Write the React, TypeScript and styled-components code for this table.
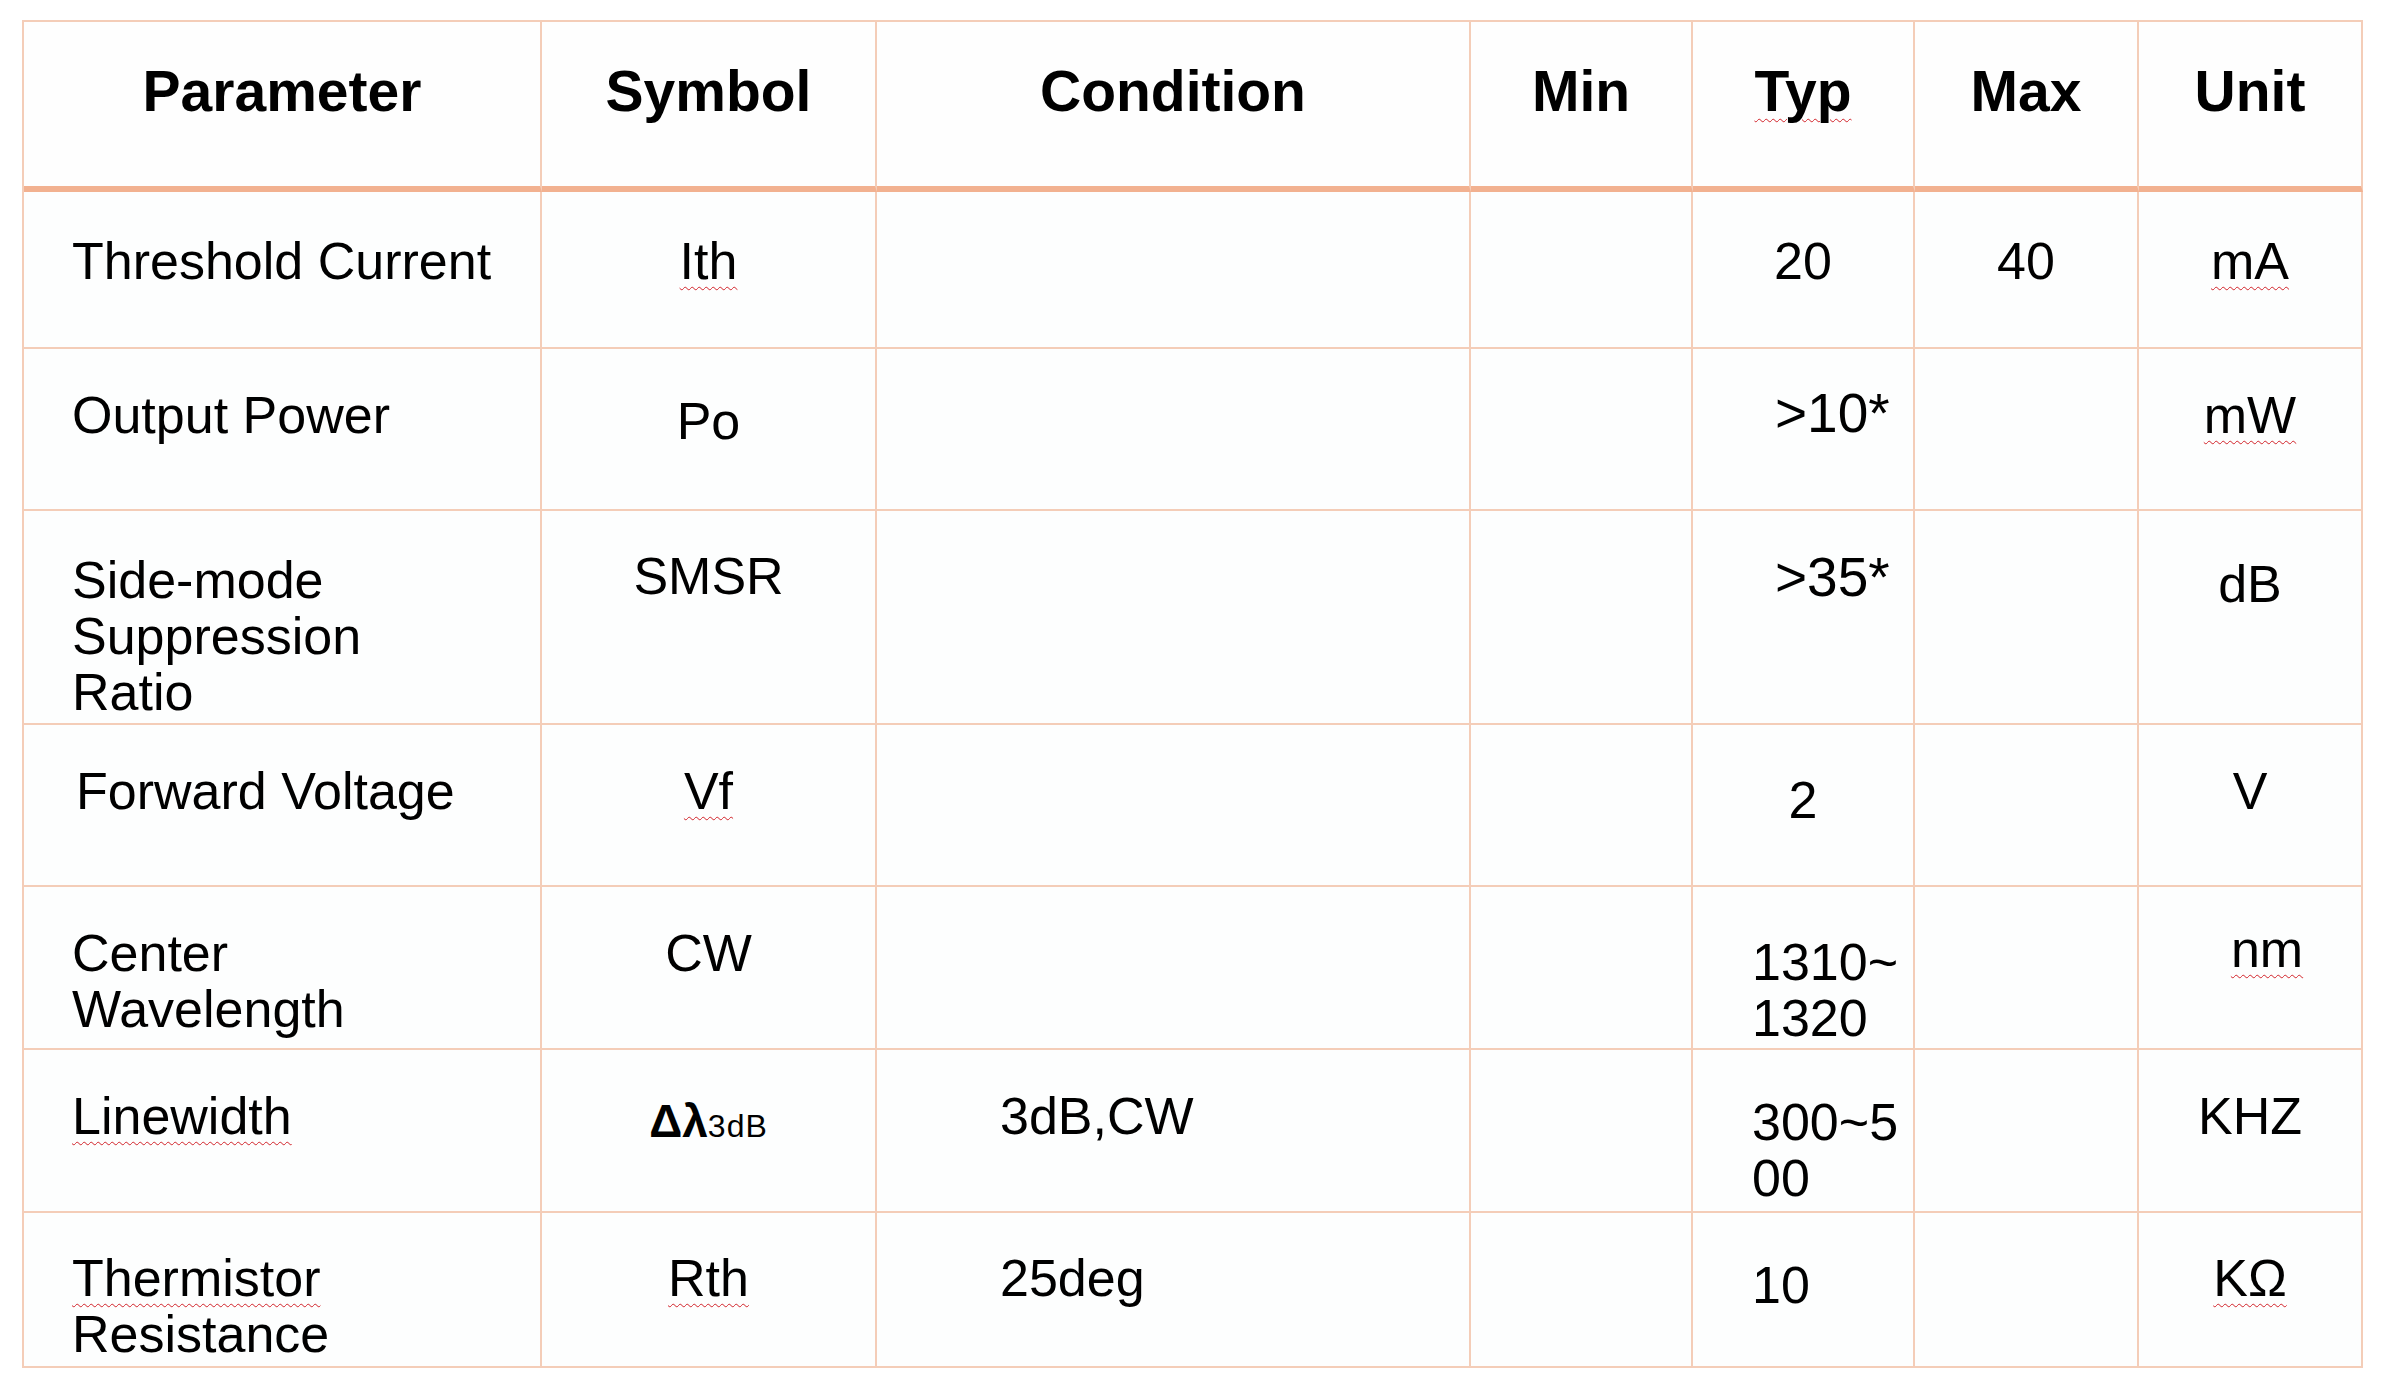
import React from "react"
import { styled, createGlobalStyle } from "styled-components"

const GlobalStyle = createGlobalStyle`
  html, body {
    margin: 0;
    background: #ffffff;
  }
  body {
    font-family: "Liberation Sans", Arial, sans-serif;
    color: #000000;
  }
`

const Page = styled.div`
  padding: 20px 0 0 22px;
`

const Sheet = styled.div`
  display: grid;
  grid-template-columns: 518px 335px 594px 222px 222px 224px 224px;
  grid-template-rows: 170px 157px 162px 214px 162px 163px 163px 155px;
  width: fit-content;
  border-top: 2px solid #f4cdb8;
  border-left: 2px solid #f4cdb8;
`

const HeadCell = styled.div`
  box-sizing: border-box;
  padding-top: 37px;
  border-right: 2px solid #f4cdb8;
  border-bottom: 6px solid #f2b190;
  background: #fefefe;
  text-align: center;
  font-size: 57px;
  line-height: 64px;
  font-weight: 700;
  white-space: nowrap;
`

const Cell = styled.div<{ $top: number; $align: "left" | "center"; $left: number }>`
  box-sizing: border-box;
  padding-top: ${(p) => p.$top}px;
  padding-left: ${(p) => p.$left}px;
  border-right: 2px solid #f4cdb8;
  border-bottom: 2px solid #f4cdb8;
  background: #fdfefe;
  text-align: ${(p) => p.$align};
  font-size: 52px;
  line-height: 56px;
  white-space: nowrap;
`

// spell-check squiggle, as the source document shows it
const Wavy = styled.span`
  text-decoration: underline wavy #d2232a;
  text-decoration-thickness: 1px;
  text-underline-offset: 7px;
`

const Big = styled.span`
  font-size: 55px;
`

const Greek = styled.span`
  font-size: 46px;
  font-weight: 700;
`

const Sub = styled.span`
  font-size: 32px;
  letter-spacing: 1px;
`

interface CellSpec {
  content?: React.ReactNode
  top?: number
  align?: "left" | "center"
  left?: number
}

const headers = ["Parameter", "Symbol", "Condition", "Min", "Typ", "Max", "Unit"]

function buildRows(): CellSpec[][] {
  return [
    [
      { content: "Threshold Current", top: 41 },
      { content: <Wavy>Ith</Wavy>, top: 41, align: "center" },
      {},
      {},
      { content: "20", top: 41, align: "center" },
      { content: "40", top: 41, align: "center" },
      { content: <Wavy>mA</Wavy>, top: 41, align: "center" }
    ],
    [
      { content: "Output Power", top: 38 },
      { content: "Po", top: 44, align: "center" },
      {},
      {},
      { content: <Big>&gt;10*</Big>, top: 36, left: 82 },
      {},
      { content: <Wavy>mW</Wavy>, top: 38, align: "center" }
    ],
    [
      { content: <>Side-mode<br />Suppression<br />Ratio</>, top: 41 },
      { content: "SMSR", top: 37, align: "center" },
      {},
      {},
      { content: <Big>&gt;35*</Big>, top: 38, left: 82 },
      {},
      { content: "dB", top: 45, align: "center" }
    ],
    [
      { content: "Forward Voltage", top: 38, left: 52 },
      { content: <Wavy>Vf</Wavy>, top: 38, align: "center" },
      {},
      {},
      { content: "2", top: 47, align: "center" },
      {},
      { content: "V", top: 38, align: "center" }
    ],
    [
      { content: <>Center<br />Wavelength</>, top: 38 },
      { content: "CW", top: 38, align: "center" },
      {},
      {},
      { content: <>1310~<br />1320</>, top: 47, left: 59 },
      {},
      { content: <Wavy>nm</Wavy>, top: 34, align: "center", left: 34 }
    ],
    [
      { content: <Wavy>Linewidth</Wavy>, top: 38 },
      {
        content: (
          <>
            <Greek>Δλ</Greek>
            <Sub>3dB</Sub>
          </>
        ),
        top: 41,
        align: "center"
      },
      { content: "3dB,CW", top: 38, left: 123 },
      {},
      { content: <>300~5<br />00</>, top: 44, left: 59 },
      {},
      { content: "KHZ", top: 38, align: "center" }
    ],
    [
      { content: <><Wavy>Thermistor</Wavy><br />Resistance</>, top: 37 },
      { content: <Wavy>Rth</Wavy>, top: 37, align: "center" },
      { content: "25deg", top: 37, left: 123 },
      {},
      { content: "10", top: 44, left: 59 },
      {},
      { content: <Wavy>KΩ</Wavy>, top: 37, align: "center" }
    ]
  ]
}

function App() {
  const rows = buildRows()
  return (
    <>
      <GlobalStyle />
      <Page>
        <Sheet>
          {headers.map((h) => (
            <HeadCell key={h}>{h === "Typ" ? <Wavy>{h}</Wavy> : h}</HeadCell>
          ))}
          {rows.map((row, r) =>
            row.map((cell, c) => (
              <Cell
                key={`${r}-${c}`}
                $top={cell.top ?? 0}
                $align={cell.align ?? "left"}
                $left={cell.left ?? (c === 0 ? 48 : 0)}
              >
                {cell.content}
              </Cell>
            ))
          )}
        </Sheet>
      </Page>
    </>
  )
}

export default App
